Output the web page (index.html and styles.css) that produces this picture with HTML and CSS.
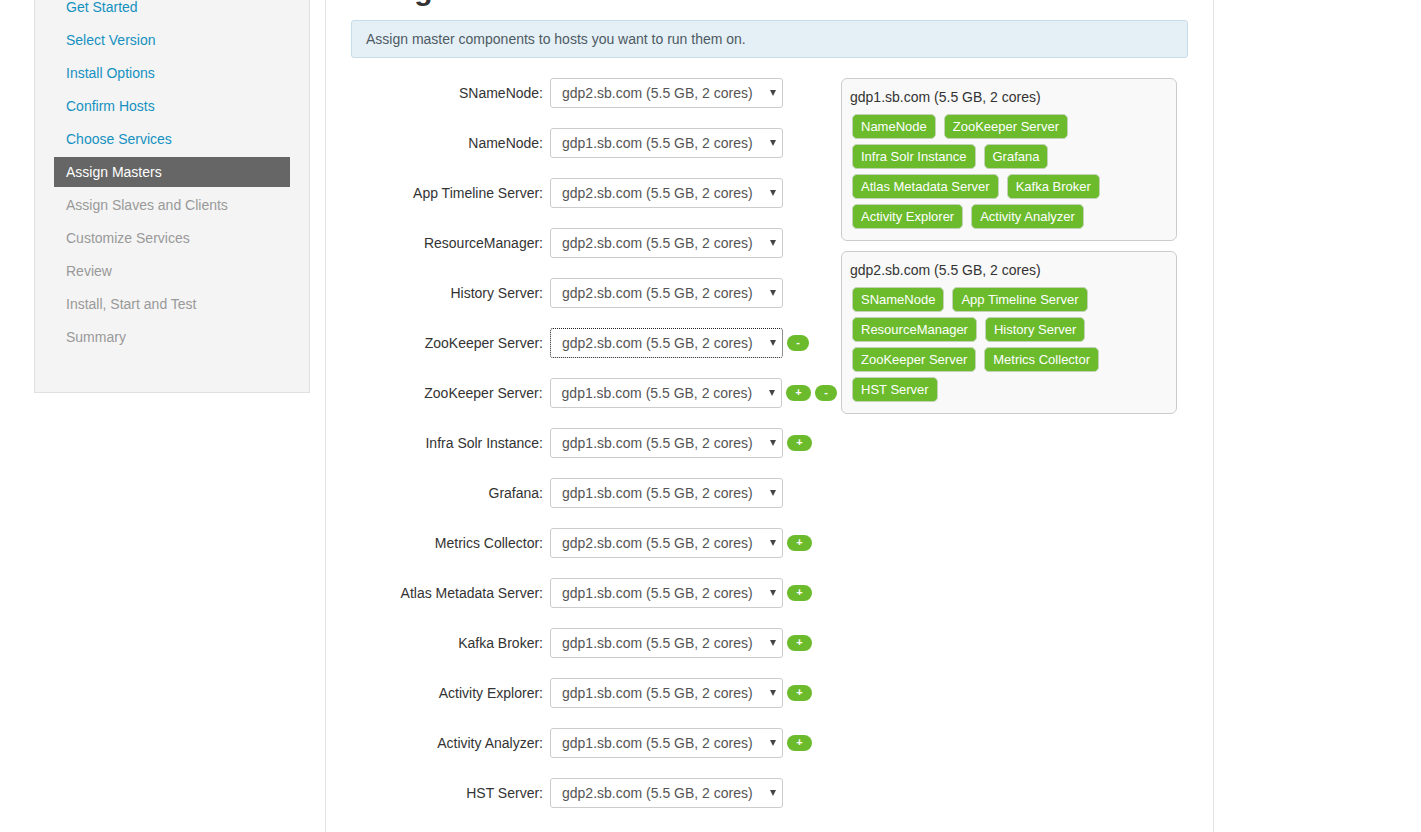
FILE: index.html
```html
<!DOCTYPE html>
<html>
<head>
<meta charset="utf-8">
<link rel="stylesheet" href="styles.css">
</head>
<body>
<div class="page">
  <aside class="sidebar">
    <ul class="steps">
      <li class="step done">Get Started</li>
      <li class="step done">Select Version</li>
      <li class="step done">Install Options</li>
      <li class="step done">Confirm Hosts</li>
      <li class="step done">Choose Services</li>
      <li class="step active">Assign Masters</li>
      <li class="step todo">Assign Slaves and Clients</li>
      <li class="step todo">Customize Services</li>
      <li class="step todo">Review</li>
      <li class="step todo">Install, Start and Test</li>
      <li class="step todo">Summary</li>
    </ul>
  </aside>
  <main class="main">
    <h2 class="title">Assign Masters</h2>
    <div class="alert">Assign master components to hosts you want to run them on.</div>
    <div class="content">
      <div class="form">
        <div class="row"><label class="lbl">SNameNode:</label><div class="sel"><span>gdp2.sb.com (5.5 GB, 2 cores)</span><span class="caret"></span></div></div>
        <div class="row"><label class="lbl">NameNode:</label><div class="sel"><span>gdp1.sb.com (5.5 GB, 2 cores)</span><span class="caret"></span></div></div>
        <div class="row"><label class="lbl">App Timeline Server:</label><div class="sel"><span>gdp2.sb.com (5.5 GB, 2 cores)</span><span class="caret"></span></div></div>
        <div class="row"><label class="lbl">ResourceManager:</label><div class="sel"><span>gdp2.sb.com (5.5 GB, 2 cores)</span><span class="caret"></span></div></div>
        <div class="row"><label class="lbl">History Server:</label><div class="sel"><span>gdp2.sb.com (5.5 GB, 2 cores)</span><span class="caret"></span></div></div>
        <div class="row"><label class="lbl">ZooKeeper Server:</label><div class="sel focused"><span>gdp2.sb.com (5.5 GB, 2 cores)</span><span class="caret"></span></div><span class="pill minus">-</span></div>
        <div class="row"><label class="lbl">ZooKeeper Server:</label><div class="sel"><span>gdp1.sb.com (5.5 GB, 2 cores)</span><span class="caret"></span></div><span class="pill">+</span><span class="pill minus">-</span></div>
        <div class="row"><label class="lbl">Infra Solr Instance:</label><div class="sel"><span>gdp1.sb.com (5.5 GB, 2 cores)</span><span class="caret"></span></div><span class="pill">+</span></div>
        <div class="row"><label class="lbl">Grafana:</label><div class="sel"><span>gdp1.sb.com (5.5 GB, 2 cores)</span><span class="caret"></span></div></div>
        <div class="row"><label class="lbl">Metrics Collector:</label><div class="sel"><span>gdp2.sb.com (5.5 GB, 2 cores)</span><span class="caret"></span></div><span class="pill">+</span></div>
        <div class="row"><label class="lbl">Atlas Metadata Server:</label><div class="sel"><span>gdp1.sb.com (5.5 GB, 2 cores)</span><span class="caret"></span></div><span class="pill">+</span></div>
        <div class="row"><label class="lbl">Kafka Broker:</label><div class="sel"><span>gdp1.sb.com (5.5 GB, 2 cores)</span><span class="caret"></span></div><span class="pill">+</span></div>
        <div class="row"><label class="lbl">Activity Explorer:</label><div class="sel"><span>gdp1.sb.com (5.5 GB, 2 cores)</span><span class="caret"></span></div><span class="pill">+</span></div>
        <div class="row"><label class="lbl">Activity Analyzer:</label><div class="sel"><span>gdp1.sb.com (5.5 GB, 2 cores)</span><span class="caret"></span></div><span class="pill">+</span></div>
        <div class="row"><label class="lbl">HST Server:</label><div class="sel"><span>gdp2.sb.com (5.5 GB, 2 cores)</span><span class="caret"></span></div></div>
      </div>
      <div class="hosts">
        <div class="host">
          <div class="host-name">gdp1.sb.com (5.5 GB, 2 cores)</div>
          <div class="badges">
            <span class="badge">NameNode</span>
            <span class="badge">ZooKeeper Server</span>
            <span class="badge">Infra Solr Instance</span>
            <span class="badge">Grafana</span>
            <span class="badge">Atlas Metadata Server</span>
            <span class="badge">Kafka Broker</span>
            <span class="badge">Activity Explorer</span>
            <span class="badge">Activity Analyzer</span>
          </div>
        </div>
        <div class="host">
          <div class="host-name">gdp2.sb.com (5.5 GB, 2 cores)</div>
          <div class="badges">
            <span class="badge">SNameNode</span>
            <span class="badge">App Timeline Server</span>
            <span class="badge">ResourceManager</span>
            <span class="badge">History Server</span>
            <span class="badge">ZooKeeper Server</span>
            <span class="badge">Metrics Collector</span>
            <span class="badge">HST Server</span>
          </div>
        </div>
      </div>
    </div>
  </main>
</div>
</body>
</html>
```

FILE: styles.css
```css
* { box-sizing: border-box; }
html, body {
  margin: 0;
  padding: 0;
  background: #fff;
  font-family: "Liberation Sans", Arial, sans-serif;
  font-size: 14px;
  color: #333;
  overflow: hidden;
}
.page {
  display: flex;
  align-items: flex-start;
  margin-top: -50px;
}
.sidebar {
  margin-left: 34px;
  width: 276px;
  background: #f4f4f4;
  border: 1px solid #e0e0e0;
  padding: 41px 19px 40px;
}
.steps {
  list-style: none;
  margin: 0;
  padding: 0;
}
.step {
  height: 30px;
  line-height: 31px;
  padding-left: 12px;
  margin-bottom: 3px;
  font-size: 14px;
}
.step:last-child { margin-bottom: 0; }
.step.done { color: #1491c1; }
.step.todo { color: #999; }
.step.active { background: #666; color: #fff; }

.main {
  margin-left: 15px;
  width: 889px;
  min-height: 1000px;
  border-left: 1px solid #e3e3e3;
  border-right: 1px solid #e3e3e3;
  padding: 23px 25px 0;
}
.title {
  margin: 0 0 14px;
  font-size: 30px;
  line-height: 33px;
  font-weight: bold;
  color: #333;
}
.alert {
  background: #e5f0f6;
  border: 1px solid #c9dde8;
  border-radius: 3px;
  padding: 9px 14px;
  line-height: 18px;
  color: #4d5a63;
}
.content {
  display: flex;
  align-items: flex-start;
  margin-top: 20px;
}
.form {
  width: 490px;
  flex: none;
}
.row {
  display: flex;
  align-items: center;
  height: 30px;
  margin-bottom: 20px;
}
.lbl {
  width: 192px;
  text-align: right;
  margin-right: 7px;
  color: #333;
}
.sel {
  width: 233px;
  height: 30px;
  border: 1px solid #ccc;
  border-radius: 3px;
  display: flex;
  align-items: center;
  justify-content: space-between;
  padding: 0 6px 0 11px;
  color: #555;
  background: #fff;
  margin-right: 4px;
}
.sel.focused {
  border-color: #fff;
  outline: 1px dotted #222;
  outline-offset: -1px;
}
.caret {
  width: 0;
  height: 0;
  border-left: 3px solid transparent;
  border-right: 3px solid transparent;
  border-top: 6px solid #444;
}
.pill {
  display: inline-block;
  background: #6bbb2c;
  color: #fff;
  font-size: 11px;
  font-weight: bold;
  height: 16px;
  line-height: 15px;
  width: 25px;
  text-align: center;
  border-radius: 8px;
  margin-right: 4px;
}
.pill.minus { width: 22px; }

.hosts {
  width: 336px;
  flex: none;
}
.host {
  border: 1px solid #ccc;
  border-radius: 6px;
  background: #f9f9f9;
  padding: 9px 8px 11px;
  margin-bottom: 10px;
}
.host-name {
  line-height: 19px;
  color: #333;
  margin-bottom: 7px;
}
.badges {
  display: flex;
  flex-wrap: wrap;
  column-gap: 8px;
  row-gap: 5px;
  padding-left: 2px;
}
.badge {
  display: inline-block;
  height: 25px;
  line-height: 23px;
  padding: 0 8px;
  background: #6bbb2c;
  color: #fff;
  border: 1px solid #c2d2b6;
  border-radius: 5px;
  font-size: 13px;
}
```
